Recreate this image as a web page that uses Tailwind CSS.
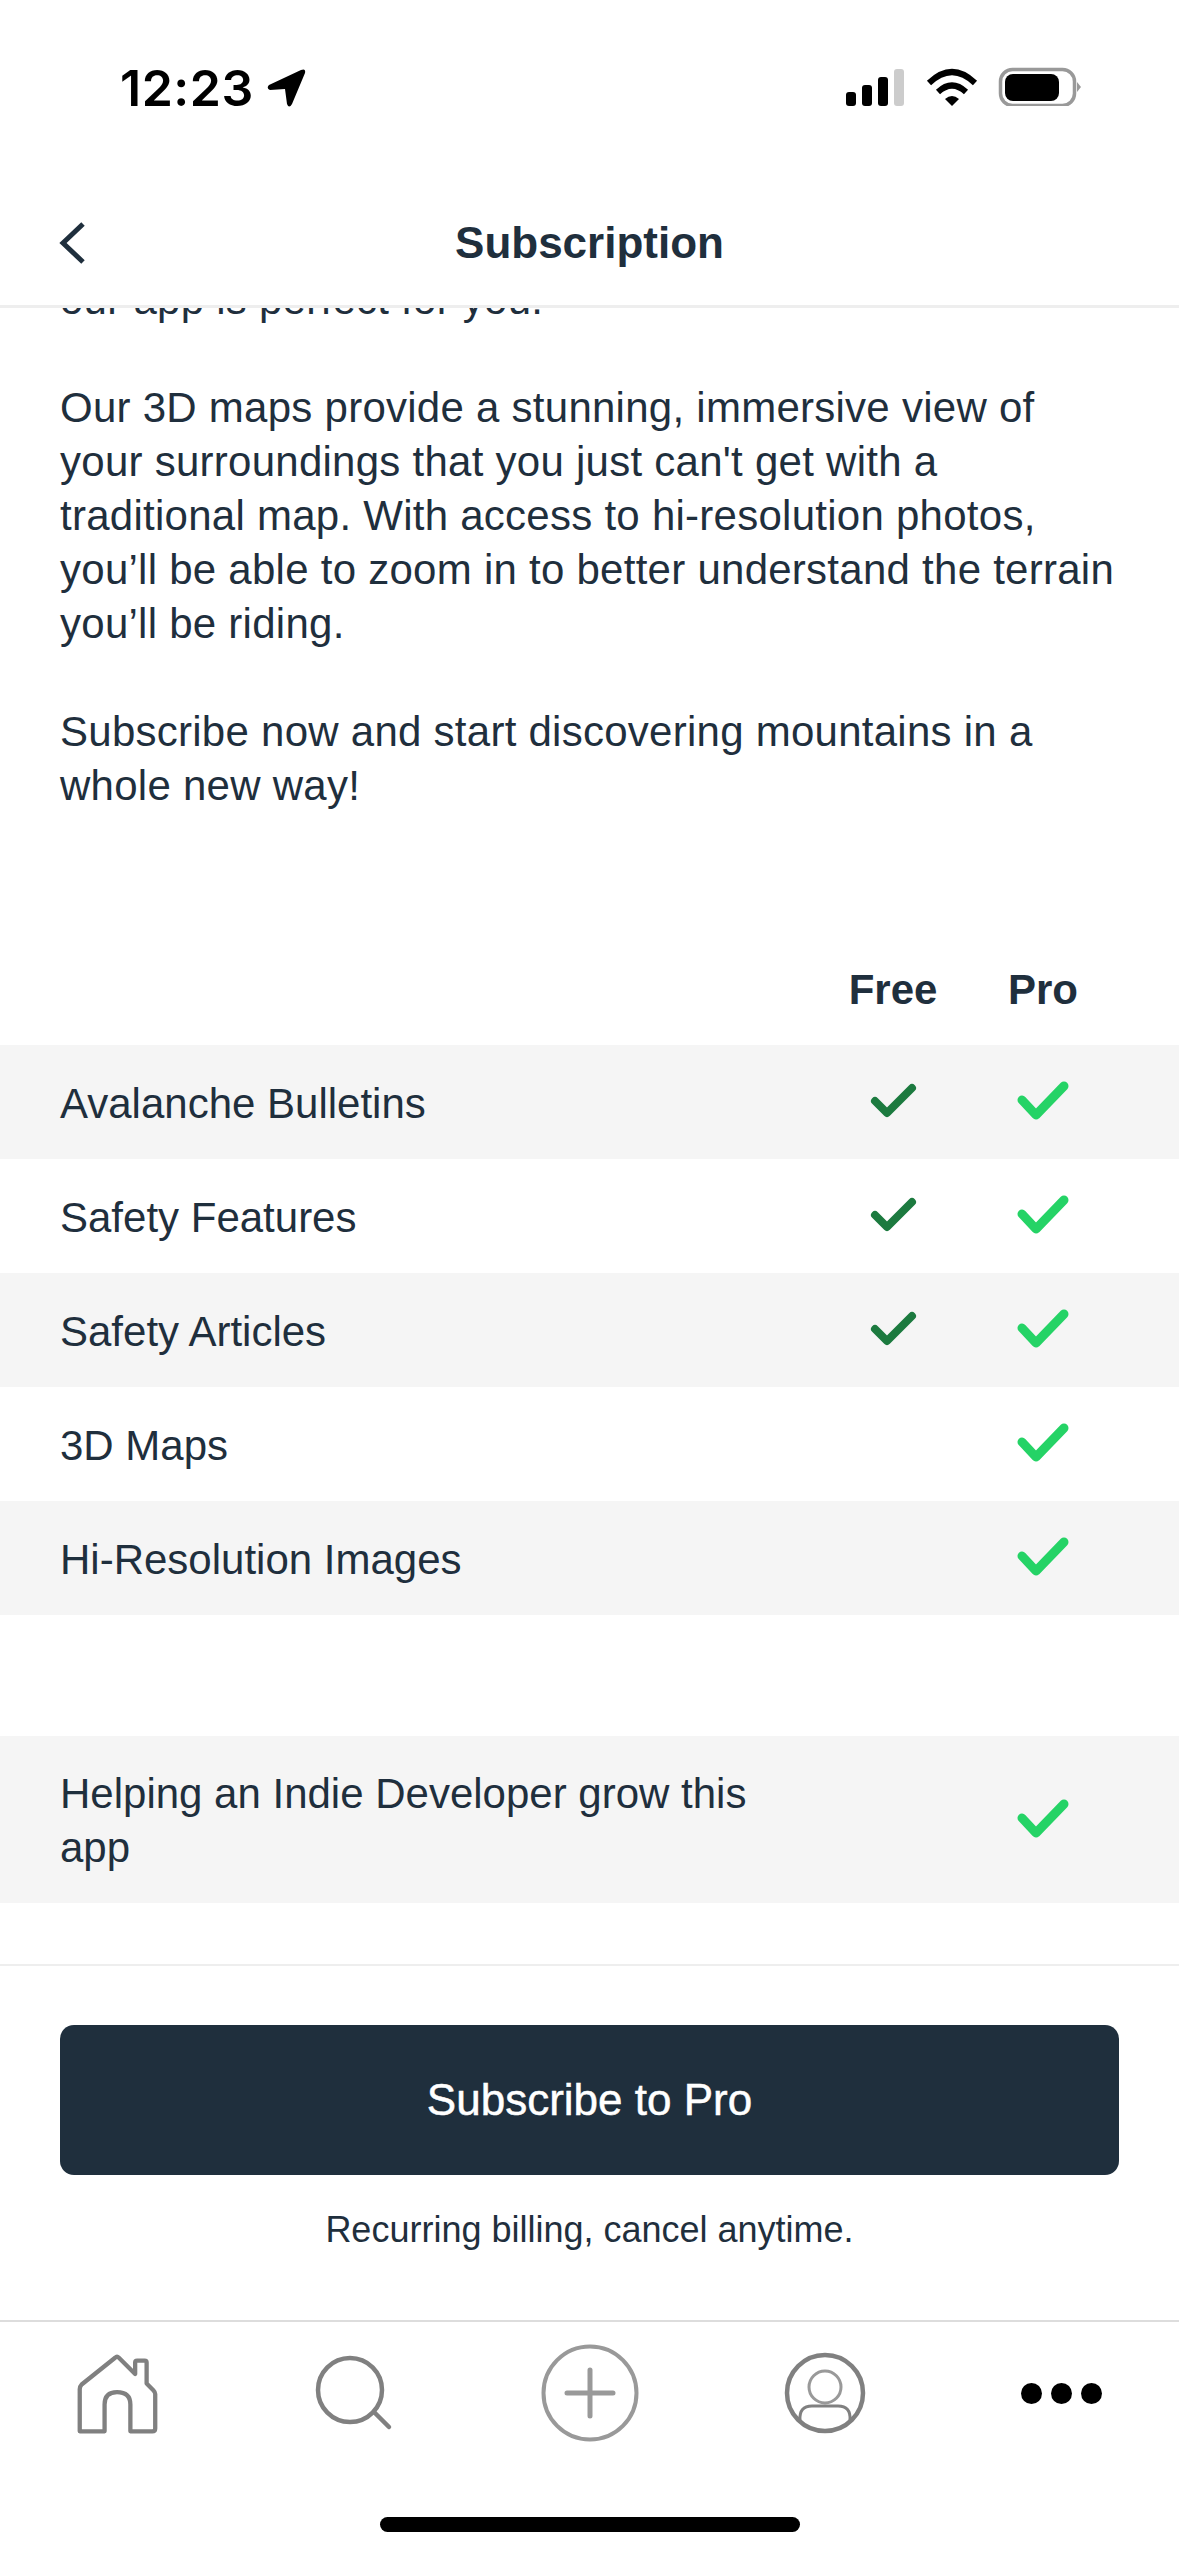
<!DOCTYPE html>
<html>
<head>
<meta charset="utf-8">
<script src="https://cdn.jsdelivr.net/npm/@tailwindcss/browser@4"></script>
</head>
<body class="bg-white">
<div class="w-[1179px] h-[2556px] flex flex-col overflow-hidden bg-white font-['Liberation_Sans',Arial,sans-serif] text-[#1f2f3d]">
  <!-- top -->
  <header class="relative z-10 h-[308px] shrink-0 bg-white border-b-[3px] border-[#eeeeee]">
    <div class="h-[180px] pl-[120px] pr-[98px] pt-[56px] flex justify-between items-start">
      <div class="flex items-center gap-[12px] h-[50px] mt-[7px] text-black">
        <span class="font-['Inter',sans-serif] text-[50px] leading-[50px] font-semibold tracking-[0.5px]">12:23</span>
        <svg class="w-[40px] h-[40px]" viewBox="0 0 40 40"><path d="M3 17 L35 2 Q40 0 39 5 L26 36 Q23 41 21 36 L19 21 L4 22 Q0 20 3 17Z" fill="#000"/></svg>
      </div>
      <svg class="w-[240px] h-[50px]" viewBox="0 0 240 50">
        <g fill="#000"><rect x="5" y="36" width="10" height="14" rx="3"/><rect x="21" y="29" width="10" height="21" rx="3"/><rect x="37" y="21" width="10" height="29" rx="3"/></g>
        <rect x="53" y="13" width="10" height="37" rx="3" fill="#cccccc"/>
        <g fill="none" stroke="#000" stroke-width="6"><path d="M88 27 Q111 5 134 27"/><path d="M97 36 Q111 23 125 36"/></g>
        <path d="M104 43 Q111 37 118 43 L111 50Z" fill="#000"/>
        <rect x="159.500" y="13.500" width="74" height="36" rx="12" fill="none" stroke="#999999" stroke-width="3.500"/>
        <rect x="164" y="18" width="54" height="27" rx="8" fill="#000"/>
        <path d="M236 26 L240 31 L236 36Z" fill="#999999"/>
      </svg>
    </div>
    <div class="relative h-[125px] flex items-center justify-center">
      <svg class="absolute left-[56px] top-[40px] w-[32px] h-[46px]" viewBox="0 0 32 46"><path d="M27 4 L7 23 L27 42" fill="none" stroke="#1f2f3d" stroke-width="5"/></svg>
      <h1 class="text-[44px] leading-[54px] font-bold">Subscription</h1>
    </div>
  </header>

  <!-- content -->
  <main class="flex-1 min-h-0 overflow-hidden">
    <div class="-mt-[35px] px-[60px] text-[42px] leading-[54px] tracking-[0.26px]">
      <p>our app is perfect for you.</p>
      <p class="mt-[54px]">Our 3D maps provide a stunning, immersive view of your surroundings that you just can't get with a traditional map. With access to hi-resolution photos, you’ll be able to zoom in to better understand the terrain you’ll be riding.</p>
      <p class="mt-[54px]">Subscribe now and start discovering mountains in a whole new way!</p>
    </div>

    <div class="mt-[150px] h-[82px] pr-[61px] flex justify-end text-[42px] leading-[54px] font-bold">
      <span class="w-[150px] text-center">Free</span>
      <span class="w-[150px] text-center">Pro</span>
    </div>

    <div class="text-[42px] leading-[54px]">
      <div class="h-[114px] pl-[60px] pr-[61px] flex items-center bg-[#f5f5f5]">
        <span class="flex-1 mt-[3px]">Avalanche Bulletins</span>
        <span class="w-[150px] flex justify-center"><svg class="w-[60px] h-[60px]" viewBox="0 0 60 60"><path d="M12 29 L24 41 L49 16" fill="none" stroke="#1c7a3f" stroke-width="8" stroke-linecap="round" stroke-linejoin="round"/></svg></span>
        <span class="w-[150px] flex justify-center"><svg class="w-[60px] h-[60px]" viewBox="0 0 60 60"><path d="M9 28 L23 43 L51 14" fill="none" stroke="#25d366" stroke-width="9" stroke-linecap="round" stroke-linejoin="round"/></svg></span>
      </div>
      <div class="h-[114px] pl-[60px] pr-[61px] flex items-center">
        <span class="flex-1 mt-[3px]">Safety Features</span>
        <span class="w-[150px] flex justify-center"><svg class="w-[60px] h-[60px]" viewBox="0 0 60 60"><path d="M12 29 L24 41 L49 16" fill="none" stroke="#1c7a3f" stroke-width="8" stroke-linecap="round" stroke-linejoin="round"/></svg></span>
        <span class="w-[150px] flex justify-center"><svg class="w-[60px] h-[60px]" viewBox="0 0 60 60"><path d="M9 28 L23 43 L51 14" fill="none" stroke="#25d366" stroke-width="9" stroke-linecap="round" stroke-linejoin="round"/></svg></span>
      </div>
      <div class="h-[114px] pl-[60px] pr-[61px] flex items-center bg-[#f5f5f5]">
        <span class="flex-1 mt-[3px]">Safety Articles</span>
        <span class="w-[150px] flex justify-center"><svg class="w-[60px] h-[60px]" viewBox="0 0 60 60"><path d="M12 29 L24 41 L49 16" fill="none" stroke="#1c7a3f" stroke-width="8" stroke-linecap="round" stroke-linejoin="round"/></svg></span>
        <span class="w-[150px] flex justify-center"><svg class="w-[60px] h-[60px]" viewBox="0 0 60 60"><path d="M9 28 L23 43 L51 14" fill="none" stroke="#25d366" stroke-width="9" stroke-linecap="round" stroke-linejoin="round"/></svg></span>
      </div>
      <div class="h-[114px] pl-[60px] pr-[61px] flex items-center">
        <span class="flex-1 mt-[3px]">3D Maps</span>
        <span class="w-[150px]"></span>
        <span class="w-[150px] flex justify-center"><svg class="w-[60px] h-[60px]" viewBox="0 0 60 60"><path d="M9 28 L23 43 L51 14" fill="none" stroke="#25d366" stroke-width="9" stroke-linecap="round" stroke-linejoin="round"/></svg></span>
      </div>
      <div class="h-[114px] pl-[60px] pr-[61px] flex items-center bg-[#f5f5f5]">
        <span class="flex-1 mt-[3px]">Hi-Resolution Images</span>
        <span class="w-[150px]"></span>
        <span class="w-[150px] flex justify-center"><svg class="w-[60px] h-[60px]" viewBox="0 0 60 60"><path d="M9 28 L23 43 L51 14" fill="none" stroke="#25d366" stroke-width="9" stroke-linecap="round" stroke-linejoin="round"/></svg></span>
      </div>
      <div class="mt-[121px] h-[167px] pl-[60px] pr-[61px] flex items-center bg-[#f5f5f5]">
        <span class="flex-1 mt-[3px] pr-[160px]">Helping an Indie Developer grow this app</span>
        <span class="w-[150px] flex justify-center"><svg class="w-[60px] h-[60px]" viewBox="0 0 60 60"><path d="M9 28 L23 43 L51 14" fill="none" stroke="#25d366" stroke-width="9" stroke-linecap="round" stroke-linejoin="round"/></svg></span>
      </div>
    </div>
  </main>

  <!-- subscribe -->
  <section class="h-[356px] shrink-0 border-t-[2px] border-[#eeeeee] px-[60px] pt-[59px] flex flex-col items-stretch">
    <button class="h-[150px] rounded-[14px] bg-[#1f2f3d] text-white text-[44px] [-webkit-text-stroke:0.5px_white]">Subscribe to Pro</button>
    <p class="mt-[32px] text-center text-[36px] leading-[46px]">Recurring billing, cancel anytime.</p>
  </section>

  <!-- tabs -->
  <nav class="relative h-[236px] shrink-0 border-t-[2px] border-[#dddddd]">
    <div class="h-[142px] grid grid-cols-[234px_242px_228px_242px_230px] items-center justify-items-center">
      <svg class="w-[86px] h-[86px] mt-[4px]" viewBox="0 0 90 90"><path d="M6 83 L6 39 Q6 36 8 34 L43 6 Q45 4 47 6 L64 23 L64 11 Q64 9 66 9 L74 9 Q76 9 76 11 L76 33 L83 40 Q85 42 85 44 L85 80 Q85 83 82 83 L59 83 L59 55 Q59 42 45 42 Q32 42 32 55 L32 83 L9 83 Q6 83 6 83Z" fill="none" stroke="#808080" stroke-width="4.500" stroke-linejoin="round" stroke-linecap="round"/></svg>
      <svg class="w-[90px] h-[90px] mt-[4px]" viewBox="0 0 90 90"><circle cx="40" cy="40" r="32" fill="none" stroke="#808080" stroke-width="4.500"/><path d="M64 62 L79 77" fill="none" stroke="#808080" stroke-width="4.500" stroke-linecap="round"/></svg>
      <svg class="w-[100px] h-[100px]" viewBox="0 0 100 100"><circle cx="50" cy="50" r="46.500" fill="none" stroke="#999999" stroke-width="4"/><path d="M50 27 L50 73 M27 50 L73 50" fill="none" stroke="#999999" stroke-width="5" stroke-linecap="round"/></svg>
      <svg class="w-[84px] h-[84px]" viewBox="0 0 84 84"><circle cx="42" cy="42" r="38" fill="none" stroke="#808080" stroke-width="4.500"/><circle cx="42" cy="36" r="16" fill="none" stroke="#999999" stroke-width="3"/><path d="M17 69 Q16 55 29 55 L55 55 Q68 55 67 69" fill="none" stroke="#808080" stroke-width="3"/></svg>
      <div class="flex gap-[9px]">
        <span class="w-[21px] h-[21px] rounded-full bg-black"></span>
        <span class="w-[21px] h-[21px] rounded-full bg-black"></span>
        <span class="w-[21px] h-[21px] rounded-full bg-black"></span>
      </div>
    </div>
    <div class="absolute left-[380px] top-[195px] w-[420px] h-[15px] rounded-full bg-black"></div>
  </nav>
</div>
</body>
</html>
